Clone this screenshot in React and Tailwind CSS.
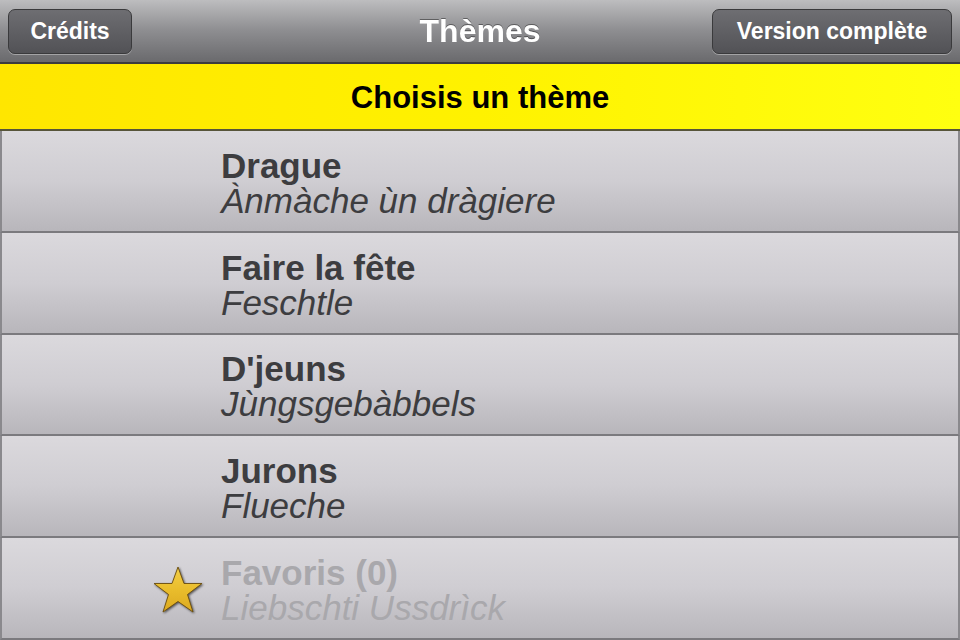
import React from "react";

const themes = [
  { title: "Drague", sub: "Ànmàche ùn dràgiere" },
  { title: "Faire la fête", sub: "Feschtle" },
  { title: "D'jeuns", sub: "Jùngsgebàbbels" },
  { title: "Jurons", sub: "Flueche" },
];

const Star = () => (
  <svg width="52" height="50" viewBox="0 0 52 50" className="drop-shadow-[1px_1px_1px_rgba(0,0,0,0.6)]">
    <defs>
      <linearGradient id="starFill" x1="0" y1="0" x2="0" y2="1">
        <stop offset="0" stopColor="#f3cf4a" />
        <stop offset="0.5" stopColor="#e9bd2c" />
        <stop offset="1" stopColor="#dca920" />
      </linearGradient>
    </defs>
    <path
      d="M26 2 L32 18.5 L50 18.5 L35.5 29.5 L41 47 L26 36.5 L11 47 L16.5 29.5 L2 18.5 L20 18.5 Z"
      fill="url(#starFill)"
      stroke="#6a4c0c"
      strokeWidth="0.9"
    />
  </svg>
);

const Row = ({ title, sub, disabled, icon }) => (
  <div className="h-[102px] border-b-2 border-[#7b7a7e] border-x-2 border-x-[#8a898d] bg-gradient-to-b from-[#dbd9dd] via-[#cfcdd2] to-[#b8b6bb] flex items-center">
    <div className="w-[219px] flex justify-end pr-[17px] pt-1">{icon}</div>
    <div
      className={`flex flex-col leading-[35px] text-[35px] pt-1 ${
        disabled ? "text-[#a9a8ac]" : "text-[#3d3d40]"
      }`}
    >
      <span className="font-bold">{title}</span>
      <span className="italic">{sub}</span>
    </div>
  </div>
);

const NavButton = ({ children, className }) => (
  <button
    className={`h-[45px] rounded-[7px] border border-[#3a3a3c] bg-gradient-to-b from-[#6e6e72] to-[#525256] text-white font-bold text-[23px] shadow-[0_1px_0_rgba(255,255,255,0.35)] ${className}`}
  >
    {children}
  </button>
);

const App = () => {
  return (
    <div
      className="w-[960px] h-[640px] overflow-hidden flex flex-col bg-[#b8b6bb]"
      style={{ fontFamily: '"Liberation Sans", Arial, sans-serif' }}
    >
      <div className="h-[64px] shrink-0 border-b-2 border-[#3c3c3e] bg-gradient-to-b from-[#bdbdbf] via-[#8d8d90] to-[#6a6a6d] flex items-center justify-between px-2 relative">
        <NavButton className="w-[124px]">Crédits</NavButton>
        <div className="absolute left-0 right-0 text-center text-white font-bold text-[32px] pointer-events-none drop-shadow-[0_-1px_0_rgba(0,0,0,0.4)]">
          Thèmes
        </div>
        <NavButton className="w-[240px]">Version complète</NavButton>
      </div>
      <div className="h-[67px] shrink-0 border-b-2 border-[#57553a] bg-gradient-to-r from-[#ffe600] via-[#fff200] to-[#ffff10] flex items-center justify-center text-black font-bold text-[31px] pt-1">
        Choisis un thème
      </div>
      {themes.map((t) => (
        <Row key={t.title} title={t.title} sub={t.sub} />
      ))}
      <Row title="Favoris (0)" sub="Liebschti Ussdrìck" disabled icon={<Star />} />
    </div>
  );
};

export default App;
